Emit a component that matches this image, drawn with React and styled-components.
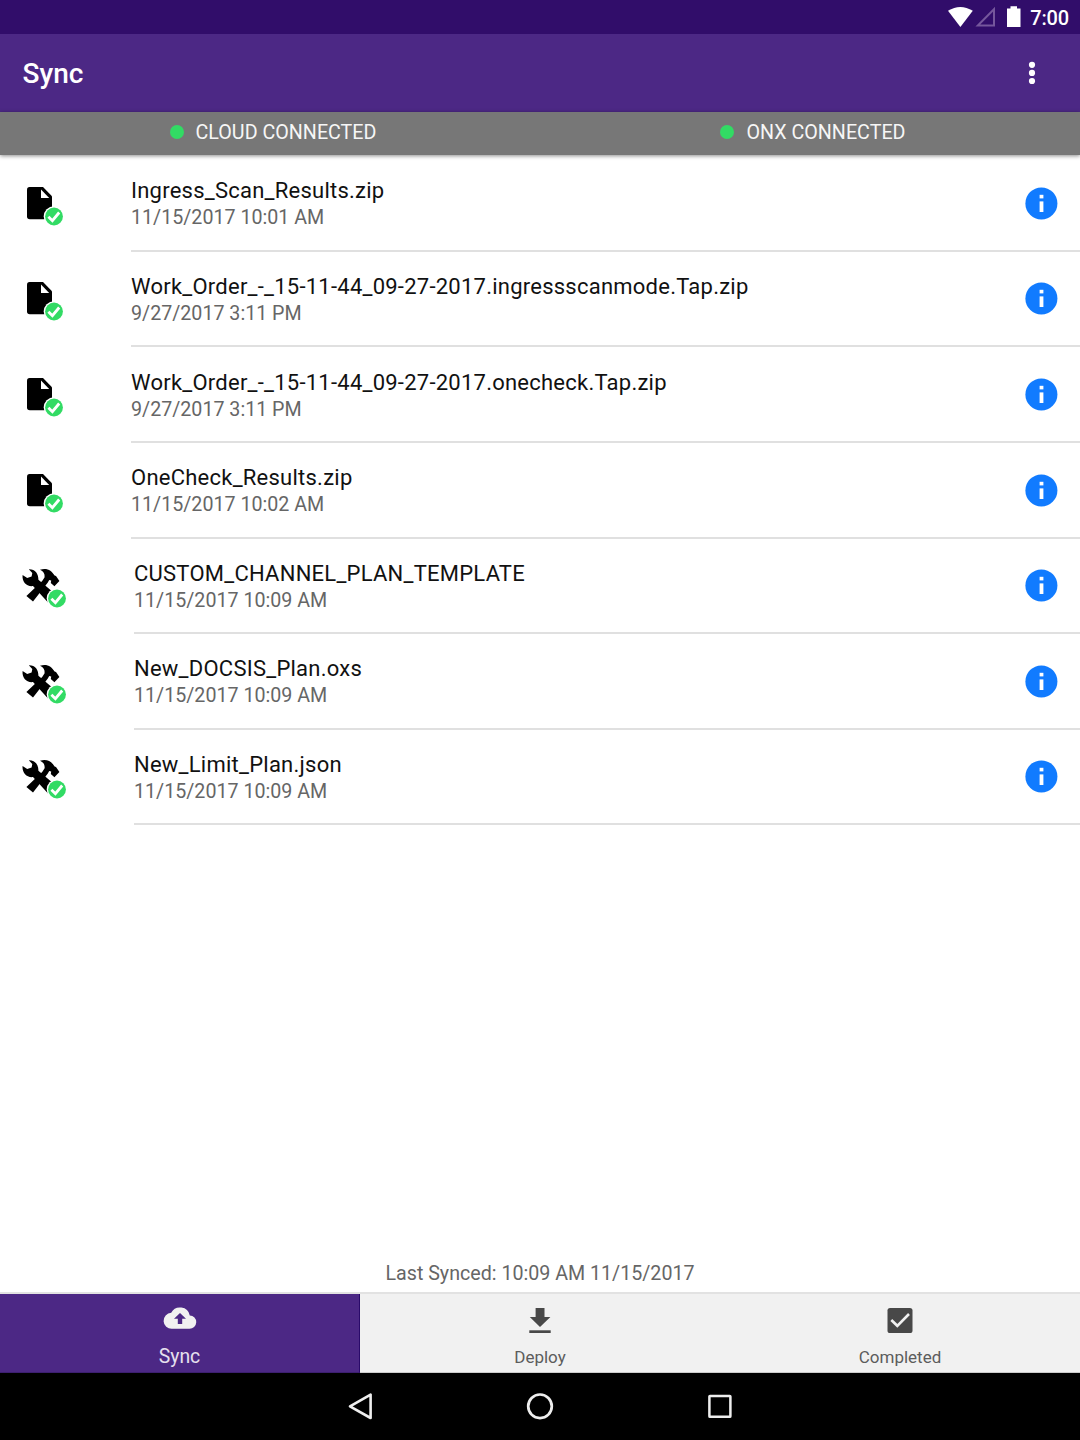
import React from "react";
import styled, { createGlobalStyle } from "styled-components";

const Global = createGlobalStyle`
  * { box-sizing: border-box; }
  html, body { margin: 0; padding: 0; background: #fff; }
  body { font-family: Roboto, "Liberation Sans", sans-serif; }
  svg { display: block; flex: none; }
`;

const Screen = styled.div`
  width: 1080px;
  height: 1440px;
  display: flex;
  flex-direction: column;
  background: #fff;
  overflow: hidden;
`;

const StatusBar = styled.div`
  height: 34px;
  flex: none;
  display: flex;
  align-items: center;
  justify-content: flex-end;
  padding-right: 11px;
  background: #310d6a;
  color: #fff;
`;

const Clock = styled.span`
  margin-left: 8px;
  font-size: 20px;
  line-height: 34px;
  font-weight: 500;
  letter-spacing: -0.15px;
  padding-top: 1px;
`;

const Toolbar = styled.header`
  height: 78px;
  flex: none;
  display: flex;
  align-items: center;
  justify-content: space-between;
  padding: 0 44px 0 22.5px;
  background: #4c2885;
`;

const Title = styled.h1`
  margin: 0;
  padding-top: 2px;
  color: #fff;
  font-size: 28px;
  line-height: 34px;
  font-weight: 500;
`;

const ConnectionBar = styled.div`
  height: 43px;
  flex: none;
  display: grid;
  grid-template-columns: 546px 1fr;
  background: #777;
  box-shadow: 0 1px 4px rgba(0, 0, 0, 0.45);
`;

const Connection = styled.div`
  display: flex;
  align-items: center;
  justify-content: center;
  gap: 12px;
  padding-bottom: 3px;
  color: #f6f6f6;
  font-size: 19.7px;
  line-height: 25px;
`;

const Dot = styled.span`
  width: 14px;
  height: 14px;
  border-radius: 50%;
  background: #32db64;
`;

const List = styled.ul`
  flex: 1;
  margin: 0;
  padding: 1.2px 0 0;
  list-style: none;
`;

const Row = styled.li`
  height: 95.6px;
  display: flex;
`;

const IconCell = styled.div`
  width: ${(p) => p.$width}px;
  flex: none;
  padding: 25.6px 0 0 20px;
`;

const RowBody = styled.div`
  flex: 1;
  display: flex;
  justify-content: space-between;
  border-bottom: 2px solid #e0e0e0;
`;

const RowText = styled.div`
  display: flex;
  flex-direction: column;
  padding-top: 22.2px;
`;

const FileName = styled.span`
  color: #111;
  font-size: 22px;
  line-height: 26px;
  letter-spacing: 0.24px;
`;

const FileDate = styled.span`
  color: #666;
  font-size: 19.65px;
  line-height: 27px;
`;

const InfoButton = styled.button`
  margin: 30.6px 22px 0 0;
  padding: 0;
  width: 33px;
  height: 33px;
  border: 0;
  background: none;
`;

const LastSynced = styled.div`
  flex: none;
  height: 39px;
  color: #666;
  font-size: 19.65px;
  line-height: 41px;
  text-align: center;
`;

const Tabs = styled.nav`
  height: 81px;
  flex: none;
  display: grid;
  grid-template-columns: repeat(3, 1fr);
  background: #f1f1f1;
  border-top: 2px solid #e2e2e2;
`;

const Tab = styled.div`
  display: flex;
  flex-direction: column;
  align-items: center;
  justify-content: space-between;
  padding: 8px 0 3px;
  background: ${(p) => (p.$active ? "#4c2885" : "#f1f1f1")};
  border-right: ${(p) => (p.$active ? "1px solid #2a0a6a" : "0")};
  border-bottom: 1px solid ${(p) => (p.$active ? "#3d1f70" : "#ccc")};
`;

const TabLabel = styled.span`
  font-size: ${(p) => (p.$active ? 19.4 : 17)}px;
  line-height: 24px;
  color: ${(p) => (p.$active ? "#e6e0ee" : "#5c5c5c")};
`;

const SystemNav = styled.div`
  height: 67px;
  flex: none;
  display: flex;
  justify-content: center;
  align-items: center;
  gap: 148px;
  padding-bottom: 1px;
  background: #000;
`;

function Badge({ x, y }) {
  return (
    <g transform={`translate(${x} ${y})`}>
      <circle r="10.3" fill="#fff" />
      <circle r="8.9" fill="#32db64" />
      <path d="M-5.6 0.2 L-1.6 4.2 L5.2 -4" fill="none" stroke="#fff" strokeWidth="2.8" />
    </g>
  );
}

function DocumentIcon() {
  return (
    <svg width="50" height="50" viewBox="20 182 50 50">
      <path d="M29.5 187H43L52 196.3V216.5Q52 219.3 49.2 219.3H29.8Q27 219.3 27 216.5V189.8Q27 187 29.5 187Z" fill="#000" />
      <path d="M41 189.6L49.2 198H41Z" fill="#fff" />
      <Badge x={54} y={216.5} />
    </svg>
  );
}

function ToolsIcon() {
  return (
    <svg width="50" height="50" viewBox="20 564.5 50 50">
      <path d="M22.6 575.4C21.8 581.8 26.4 587.4 33 586.6L48.5 603.5L57 596L38.4 580.3C38.6 574.4 35.2 569.6 28.8 569.8L32.3 573.5L31.6 577L27.2 578.6Z" fill="#000" />
      <path d="M40 570.2C47 568 51.6 571 54.6 576L56 576.6L59.4 581.4L54.4 586.8L50.8 583.6L51.2 580.9L49.2 580.4L47.8 583L33 602L26.4 596.6L42.2 581.4L44.6 577.8C45 574.2 43.4 571.7 40 570.2Z" fill="#000" />
      <Badge x={57} y={599} />
    </svg>
  );
}

function InfoIcon() {
  return (
    <svg width="33" height="33" viewBox="0 0 33 33">
      <circle cx="16.4" cy="16.4" r="16" fill="#117bff" />
      <rect x="14.6" y="7.8" width="3.8" height="3.6" fill="#fff" />
      <rect x="14.6" y="14.4" width="3.8" height="10.6" fill="#fff" />
    </svg>
  );
}

const rows = [
  ["doc", "Ingress_Scan_Results.zip", "11/15/2017 10:01 AM"],
  ["doc", "Work_Order_-_15-11-44_09-27-2017.ingressscanmode.Tap.zip", "9/27/2017 3:11 PM"],
  ["doc", "Work_Order_-_15-11-44_09-27-2017.onecheck.Tap.zip", "9/27/2017 3:11 PM"],
  ["doc", "OneCheck_Results.zip", "11/15/2017 10:02 AM"],
  ["tools", "CUSTOM_CHANNEL_PLAN_TEMPLATE", "11/15/2017 10:09 AM"],
  ["tools", "New_DOCSIS_Plan.oxs", "11/15/2017 10:09 AM"],
  ["tools", "New_Limit_Plan.json", "11/15/2017 10:09 AM"],
];

export default function App() {
  return (
    <Screen>
      <Global />
      <StatusBar>
        <svg width="76" height="34" viewBox="946 0 76 34">
          <path d="M948 10.8Q960.3 3 972.8 10.8L960.4 27Z" fill="#fff" />
          <path d="M994 9.2V25.6H977.8Z" fill="none" stroke="#75579c" strokeWidth="2" />
          <path d="M1007 8.4H1010.5V6.3H1017V8.4H1020.5V27H1007Z" fill="#fff" />
        </svg>
        <Clock>7:00</Clock>
      </StatusBar>
      <Toolbar>
        <Title>Sync</Title>
        <svg width="8" height="26" viewBox="0 0 8 26" fill="#fff">
          <circle cx="4" cy="4.8" r="3.1" />
          <circle cx="4" cy="12.9" r="3.1" />
          <circle cx="4" cy="21" r="3.1" />
        </svg>
      </Toolbar>
      <ConnectionBar>
        <Connection><Dot />CLOUD CONNECTED</Connection>
        <Connection><Dot />ONX CONNECTED</Connection>
      </ConnectionBar>
      <List>
        {rows.map(([kind, name, date]) => (
          <Row key={name}>
            <IconCell $width={kind === "doc" ? 131 : 134}>
              {kind === "doc" ? <DocumentIcon /> : <ToolsIcon />}
            </IconCell>
            <RowBody>
              <RowText>
                <FileName>{name}</FileName>
                <FileDate>{date}</FileDate>
              </RowText>
              <InfoButton aria-label="Info"><InfoIcon /></InfoButton>
            </RowBody>
          </Row>
        ))}
      </List>
      <LastSynced>Last Synced: 10:09 AM 11/15/2017</LastSynced>
      <Tabs>
        <Tab $active>
          <svg width="34" height="34" viewBox="163 1302 34 34">
            <path d="M189.8 1315.4A10 10 0 0 0 171.2 1312.8A8 8 0 0 0 172 1328.8H189.3A6.7 6.7 0 0 0 189.8 1315.4ZM182.2 1318.8V1324H177.8V1318.8H174L180 1313L186 1318.8Z" fill="#f1f1f1" />
          </svg>
          <TabLabel $active>Sync</TabLabel>
        </Tab>
        <Tab>
          <svg width="34" height="34" viewBox="523 1302 34 34" fill="#484848">
            <path d="M535.6 1308H544.5V1317H550.4L540 1327L529.8 1317H535.6Z" />
            <rect x="529.3" y="1330.3" width="21.4" height="2.7" />
          </svg>
          <TabLabel>Deploy</TabLabel>
        </Tab>
        <Tab>
          <svg width="34" height="34" viewBox="883 1302 34 34">
            <rect x="887.5" y="1308" width="25" height="25" rx="2.6" fill="#484848" />
            <path d="M891.3 1320L897.3 1325.8L909 1314" fill="none" stroke="#f1f1f1" strokeWidth="2.6" />
          </svg>
          <TabLabel>Completed</TabLabel>
        </Tab>
      </Tabs>
      <SystemNav>
        <svg width="32" height="32" viewBox="344 1390 32 32">
          <path d="M370.6 1394.6V1418L350 1406.4Z" fill="none" stroke="#eee" strokeWidth="2.6" strokeLinejoin="round" />
        </svg>
        <svg width="32" height="32" viewBox="0 0 32 32">
          <circle cx="16" cy="16.3" r="11.8" fill="none" stroke="#eee" strokeWidth="2.7" />
        </svg>
        <svg width="32" height="32" viewBox="704 1390 32 32">
          <rect x="709.4" y="1396" width="21" height="20.8" rx="0.6" fill="none" stroke="#eee" strokeWidth="2.5" />
        </svg>
      </SystemNav>
    </Screen>
  );
}
